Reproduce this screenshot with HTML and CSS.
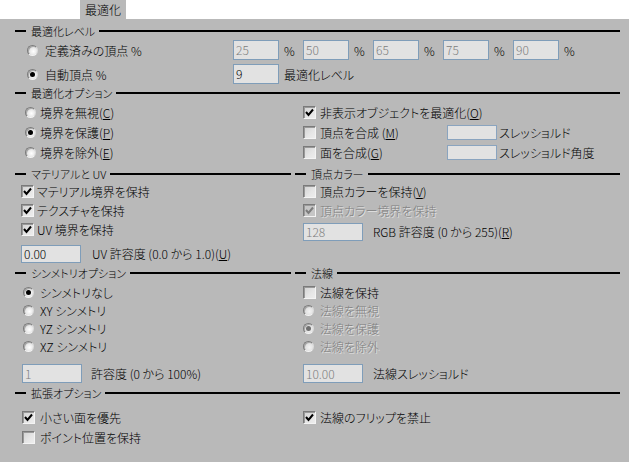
FILE: index.html
```html
<!DOCTYPE html>
<html lang="ja">
<head>
<meta charset="utf-8">
<title>最適化</title>
<link rel="stylesheet" href="styles.css">
</head>
<body>
<div class="tabs"><div class="tab">最適化</div></div>
<div class="panel">

  <section class="sec s1">
    <div class="hdr"><span>最適化レベル</span></div>
    <div class="row">
      <div class="opt lead"><span class="radio"></span>定義済みの頂点 %</div>
      <div class="pct"><span class="inp dis">25</span><span class="unit">%</span></div>
      <div class="pct"><span class="inp dis">50</span><span class="unit">%</span></div>
      <div class="pct"><span class="inp dis">65</span><span class="unit">%</span></div>
      <div class="pct"><span class="inp dis">75</span><span class="unit">%</span></div>
      <div class="pct"><span class="inp dis">90</span><span class="unit">%</span></div>
    </div>
    <div class="row">
      <div class="opt lead"><span class="radio on"></span>自動頂点 %</div>
      <span class="inp">9</span><span class="unit">最適化レベル</span>
    </div>
  </section>

  <section class="sec s2">
    <div class="hdr"><span>最適化オプション</span></div>
    <div class="cols">
      <div class="col left">
        <div class="row"><span class="radio"></span>境界を無視(<u>C</u>)</div>
        <div class="row"><span class="radio on"></span>境界を保護(<u>P</u>)</div>
        <div class="row"><span class="radio"></span>境界を除外(<u>E</u>)</div>
      </div>
      <div class="col right">
        <div class="row"><span class="check on"><svg viewBox="0 0 11 11"><path d="M2 5 L4.5 8 L9 2.5"/></svg></span>非表示オブジェクトを最適化(<u>O</u>)</div>
        <div class="row"><span class="lbl"><span class="check"></span>頂点を合成 (<u>M</u>)</span><span class="inp thin"></span><span class="after">スレッショルド</span></div>
        <div class="row"><span class="lbl"><span class="check"></span>面を合成(<u>G</u>)</span><span class="inp thin"></span><span class="after">スレッショルド角度</span></div>
      </div>
    </div>
  </section>

  <section class="sec s3">
    <div class="cols">
      <div class="col left">
        <div class="hdr"><span>マテリアルと UV</span></div>
        <div class="rows">
          <div class="row"><span class="check on"><svg viewBox="0 0 11 11"><path d="M2 5 L4.5 8 L9 2.5"/></svg></span>マテリアル境界を保持</div>
          <div class="row"><span class="check on"><svg viewBox="0 0 11 11"><path d="M2 5 L4.5 8 L9 2.5"/></svg></span>テクスチャを保持</div>
          <div class="row"><span class="check on"><svg viewBox="0 0 11 11"><path d="M2 5 L4.5 8 L9 2.5"/></svg></span>UV 境界を保持</div>
        </div>
        <div class="row field"><span class="inp wide">0.00</span><span class="flabel">UV 許容度 (0.0 から 1.0)(<u>U</u>)</span></div>
      </div>
      <div class="col right">
        <div class="hdr"><span>頂点カラー</span></div>
        <div class="rows">
          <div class="row"><span class="check"></span>頂点カラーを保持(<u>V</u>)</div>
          <div class="row disabled"><span class="check on dis"><svg viewBox="0 0 11 11"><path d="M2 5 L4.5 8 L9 2.5"/></svg></span>頂点カラー境界を保持</div>
        </div>
        <div class="row field near"><span class="inp wide dis">128</span><span class="flabel">RGB 許容度 (0 から 255)(<u>R</u>)</span></div>
      </div>
    </div>
  </section>

  <section class="sec s4">
    <div class="cols">
      <div class="col left">
        <div class="hdr"><span>シンメトリオプション</span></div>
        <div class="rows">
          <div class="row"><span class="radio on"></span>シンメトリなし</div>
          <div class="row"><span class="radio"></span>XY シンメトリ</div>
          <div class="row"><span class="radio"></span>YZ シンメトリ</div>
          <div class="row"><span class="radio"></span>XZ シンメトリ</div>
        </div>
        <div class="row field"><span class="inp wide dis">1</span><span class="flabel">許容度 (0 から 100%)</span></div>
      </div>
      <div class="col right">
        <div class="hdr"><span>法線</span></div>
        <div class="rows">
          <div class="row"><span class="check"></span>法線を保持</div>
          <div class="row disabled"><span class="radio dis"></span>法線を無視</div>
          <div class="row disabled"><span class="radio on dis"></span>法線を保護</div>
          <div class="row disabled"><span class="radio dis"></span>法線を除外</div>
        </div>
        <div class="row field"><span class="inp wide dis">10.00</span><span class="flabel">法線スレッショルド</span></div>
      </div>
    </div>
  </section>

  <section class="sec s5">
    <div class="hdr"><span>拡張オプション</span></div>
    <div class="cols">
      <div class="col left">
        <div class="row"><span class="check on"><svg viewBox="0 0 11 11"><path d="M2 5 L4.5 8 L9 2.5"/></svg></span>小さい面を優先</div>
        <div class="row"><span class="check"></span>ポイント位置を保持</div>
      </div>
      <div class="col right">
        <div class="row"><span class="check on"><svg viewBox="0 0 11 11"><path d="M2 5 L4.5 8 L9 2.5"/></svg></span>法線のフリップを禁止</div>
      </div>
    </div>
  </section>

</div>
</body>
</html>
```

FILE: styles.css
```css
html, body {
  margin: 0;
  padding: 0;
  background: #ffffff;
}
body {
  width: 629px;
  height: 462px;
  overflow: hidden;
  font-family: "Noto Sans CJK JP", "Liberation Sans", sans-serif;
  font-size: 12px;
  font-weight: 300;
  font-feature-settings: "palt";
  color: #000;
}
u { text-decoration: underline; text-underline-offset: 1px; }

.tabs {
  height: 19px;
  background: #fff;
  display: flex;
}
.tab {
  margin-left: 80px;
  width: 46px;
  height: 19px;
  background: #b9b9b9;
  text-align: center;
  line-height: 19px;
  font-size: 12px;
}

.panel {
  background: #b9b9b9;
  height: 443px;
  box-sizing: border-box;
  padding: 5px 9px 0 15px;
}

.hdr {
  display: flex;
  align-items: center;
  height: 14px;
  font-size: 11px;
  line-height: 14px;
  white-space: nowrap;
}
.hdr::before {
  content: "";
  flex: none;
  width: 11px;
  height: 2px;
  background: #000;
  margin-right: 5px;
}
.hdr::after {
  content: "";
  flex: 1;
  height: 2px;
  background: #000;
  margin-left: 4px;
}

.row {
  display: flex;
  align-items: center;
  white-space: nowrap;
}

.cols {
  display: grid;
  grid-template-columns: 276px 1fr;
  column-gap: 4px;
}

/* controls */
.radio {
  flex: none;
  position: relative;
  width: 9px;
  height: 9px;
  border-radius: 50%;
  border: 1px solid;
  border-color: #7c7c7c #dcdcdc #f2f2f2 #7c7c7c;
  background: radial-gradient(circle at 60% 60%, #ffffff 0%, #e4e4e4 55%, #c4c4c4 100%);
  box-shadow: inset 1px 1px 0 #a8a8a8;
}
.radio.on::after {
  content: "";
  position: absolute;
  left: 2px;
  top: 2px;
  width: 5px;
  height: 5px;
  border-radius: 50%;
  background: #000;
}
.radio.dis {
  background: radial-gradient(circle at 60% 60%, #f2f2f2 0%, #dedede 60%, #c8c8c8 100%);
}
.radio.on.dis::after { background: #6f6f6f; }

.check {
  flex: none;
  box-sizing: border-box;
  width: 13px;
  height: 13px;
  border: 1px solid;
  border-color: #7a7a7a #f4f4f4 #f4f4f4 #7a7a7a;
  box-shadow: inset 1px 1px 0 #9a9a9a;
  background: linear-gradient(135deg, #d2d2d2 0%, #e6e6e6 60%, #ededed 100%);
  display: flex;
  align-items: center;
  justify-content: center;
}
.check svg {
  width: 11px;
  height: 11px;
  display: block;
}
.check svg path {
  fill: none;
  stroke: #000;
  stroke-width: 2;
}
.check.dis { background: #c6c6c6; }
.check.dis svg path { stroke: #7c7c7c; }

.disabled {
  color: #7e7e7e;
  text-shadow: 1px 1px 0 #e4e4e4;
}

.inp {
  flex: none;
  box-sizing: border-box;
  display: inline-block;
  width: 46px;
  height: 20px;
  border: 1px solid #7f9db9;
  background: #e2e2e2;
  padding-left: 2px;
  line-height: 18px;
  font-size: 12px;
  color: #000;
}
.inp.dis { color: #7e7e7e; }
.inp.thin {
  width: 50px;
  height: 15px;
  border-color: #8aa4bf;
}
.inp.wide {
  width: 60px;
  height: 18px;
  line-height: 16px;
}

.unit { margin-left: 5px; }

/* section 1 */
.s1 .row { height: 24px; }
.s1 .lead {
  display: flex;
  align-items: center;
  box-sizing: border-box;
  width: 218px;
  padding-left: 12px;
}
.s1 .lead .radio { margin-right: 7px; }
.s1 .pct {
  display: flex;
  align-items: center;
  width: 70px;
}

/* section 2 */
.s2 .cols { margin-top: 2px; }
.s2 .row { height: 20px; }
.s2 .left { padding-left: 10px; }
.s2 .left .radio { margin-right: 4px; }
.s2 .right { padding-left: 8px; }
.s2 .right .check { margin-right: 4px; }
.s2 .lbl {
  display: flex;
  align-items: center;
  width: 144px;
}
.s2 .after { margin-left: 2px; }

/* section 3 */
.s3 { margin-top: 5px; }
.s3 .rows { margin-top: 1px; }
.s3 .rows .row { height: 19px; }
.s3 .left .rows, .s3 .left .field { padding-left: 6px; }
.s3 .left .check { margin-right: 3px; }
.s3 .right .rows, .s3 .right .field { padding-left: 8px; }
.s3 .right .check { margin-right: 4px; }
.s3 .field { height: 19px; margin-top: 5px; }
.s3 .field.near { margin-top: 2px; }
.s3 .left .field .flabel { margin-left: 11px; }
.s3 .right .field .flabel { margin-left: 10px; }

/* section 4 */
.s4 { margin-top: 3px; }
.s4 .rows { margin-top: 3px; }
.s4 .rows .row { height: 18px; }
.s4 .left .rows { padding-left: 8px; }
.s4 .left .radio { margin-right: 6px; }
.s4 .right .rows { padding-left: 8px; }
.s4 .right .check { margin-right: 4px; }
.s4 .right .radio { margin-right: 6px; }
.s4 .field { height: 19px; margin-top: 9px; }
.s4 .field .inp { height: 19px; line-height: 17px; }
.s4 .left .field { padding-left: 7px; }
.s4 .left .field .flabel { margin-left: 9px; }
.s4 .right .field { padding-left: 8px; }
.s4 .right .field .flabel { margin-left: 10px; }

/* section 5 */
.s5 { margin-top: 3px; }
.s5 .cols { margin-top: 7px; }
.s5 .row { height: 20px; }
.s5 .left { padding-left: 7px; }
.s5 .left .check { margin-right: 5px; }
.s5 .right { padding-left: 8px; }
.s5 .right .check { margin-right: 4px; }
```
